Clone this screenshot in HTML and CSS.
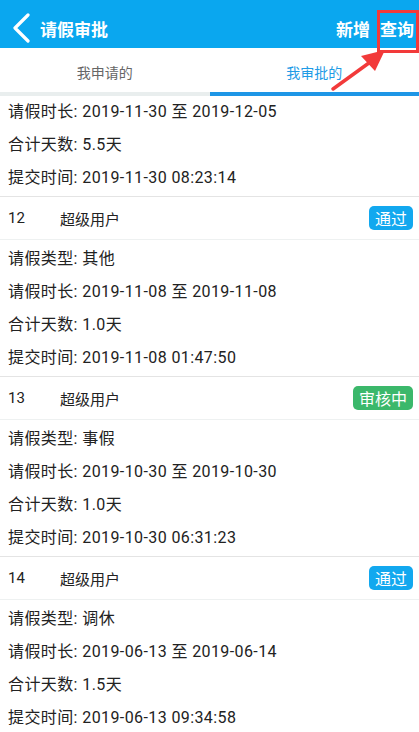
FILE: index.html
```html
<!DOCTYPE html>
<html lang="zh-CN">
<head>
    <meta charset="UTF-8">
    <meta name="viewport" content="width=device-width, initial-scale=1.0">
    <title>请假审批</title>
    <link rel="stylesheet" href="styles.css">
</head>
<body>
    <div class="page">
        <div class="topbar">
            <div class="back">
                <svg width="22" height="30" viewBox="0 0 22 30"><path d="M18 2 L5 15 L18 28" fill="none" stroke="#fff" stroke-width="3.2" stroke-linecap="round" stroke-linejoin="round"/></svg>
            </div>
            <div class="title">请假审批</div>
            <div class="actions">
                <span class="action">新增</span>
                <span class="action">查询</span>
            </div>
        </div>

        <div class="tabs">
            <div class="tab">我申请的</div>
            <div class="tab active">我审批的</div>
        </div>

        <div class="list" id="list">
            <div class="card">
                <div class="card-head">
                    <span class="num">11</span>
                    <span class="user">超级用户</span>
                    <span class="badge pass">通过</span>
                </div>
                <div class="card-body">
                    <div class="row">请假类型: 年假</div>
                    <div class="row">请假时长: 2019-11-30 至 2019-12-05</div>
                    <div class="row">合计天数: 5.5天</div>
                    <div class="row">提交时间: 2019-11-30 08:23:14</div>
                </div>
            </div>
            <div class="card">
                <div class="card-head">
                    <span class="num">12</span>
                    <span class="user">超级用户</span>
                    <span class="badge pass">通过</span>
                </div>
                <div class="card-body">
                    <div class="row">请假类型: 其他</div>
                    <div class="row">请假时长: 2019-11-08 至 2019-11-08</div>
                    <div class="row">合计天数: 1.0天</div>
                    <div class="row">提交时间: 2019-11-08 01:47:50</div>
                </div>
            </div>
            <div class="card">
                <div class="card-head">
                    <span class="num">13</span>
                    <span class="user">超级用户</span>
                    <span class="badge pending">审核中</span>
                </div>
                <div class="card-body">
                    <div class="row">请假类型: 事假</div>
                    <div class="row">请假时长: 2019-10-30 至 2019-10-30</div>
                    <div class="row">合计天数: 1.0天</div>
                    <div class="row">提交时间: 2019-10-30 06:31:23</div>
                </div>
            </div>
            <div class="card">
                <div class="card-head">
                    <span class="num">14</span>
                    <span class="user">超级用户</span>
                    <span class="badge pass">通过</span>
                </div>
                <div class="card-body">
                    <div class="row">请假类型: 调休</div>
                    <div class="row">请假时长: 2019-06-13 至 2019-06-14</div>
                    <div class="row">合计天数: 1.5天</div>
                    <div class="row">提交时间: 2019-06-13 09:34:58</div>
                </div>
            </div>
        </div>

        <!-- 标注: 红框和箭头 -->
        <div class="mark-box"></div>
        <svg class="mark-arrow" width="70" height="50" viewBox="0 0 70 50">
            <path d="M4 44 L44 15" stroke="#f23a3a" stroke-width="3.5" stroke-linecap="round"/>
            <polygon points="56,5 32,11 46,26" fill="#f23a3a"/>
        </svg>
    </div>

    <script>
        // 列表已向下滚动了一段
        document.getElementById('list').scrollTop = 80;
    </script>
</body>
</html>
```

FILE: styles.css
```css
* {
    box-sizing: border-box;
}
body {
    margin: 0;
    font-family: Roboto, "Noto Sans CJK SC", sans-serif;
    color: #222;
    background: #fff;
}
.page {
    position: relative;
    width: 419px;
    height: 732px;
    overflow: hidden;
    display: flex;
    flex-direction: column;
}
.topbar {
    height: 48px;
    padding-top: 8px;
    background-color: #0aa7ef;
    display: flex;
    align-items: center;
    color: #fff;
    flex-shrink: 0;
}
.back {
    width: 40px;
    padding-left: 10px;
    display: flex;
    align-items: center;
}
.title {
    font-size: 17px;
    font-weight: bold;
    flex: 1;
}
.actions {
    display: flex;
    gap: 10px;
    padding-right: 5px;
}
.action {
    font-size: 17px;
    font-weight: bold;
}
.tabs {
    height: 48px;
    display: flex;
    border-bottom: 4px solid #e9eeee;
    flex-shrink: 0;
}
.tab {
    flex: 1;
    display: flex;
    align-items: center;
    justify-content: center;
    padding-top: 4px;
    font-size: 14px;
    color: #666;
    margin-bottom: -4px;
    border-bottom: 4px solid transparent;
}
.tab.active {
    color: #1e9be6;
    border-bottom-color: #1e96e6;
}
.list {
    flex: 1;
    overflow: hidden;
}
.card {
    border-top: 1px solid #e4e4e4;
    padding-bottom: 4px;
}
.card-head {
    height: 43px;
    display: flex;
    align-items: center;
    padding: 0 6px 0 8px;
    border-bottom: 1px solid #eef1f1;
    font-size: 15px;
}
.num {
    width: 52px;
}
.user {
    flex: 1;
}
.badge {
    height: 24px;
    padding: 0 6px;
    border-radius: 5px;
    color: #fff;
    font-size: 16px;
    display: flex;
    align-items: center;
}
.badge.pass {
    background-color: #12a8ef;
}
.badge.pending {
    background-color: #3bb86b;
}
.row {
    height: 33px;
    display: flex;
    align-items: center;
    padding-left: 8px;
    font-size: 16px;
    letter-spacing: 0.4px;
}
.mark-box {
    position: absolute;
    left: 377px;
    top: 10px;
    width: 42px;
    height: 43px;
    border: 3px solid #f23a3a;
}
.mark-arrow {
    position: absolute;
    left: 329px;
    top: 45px;
}
```
